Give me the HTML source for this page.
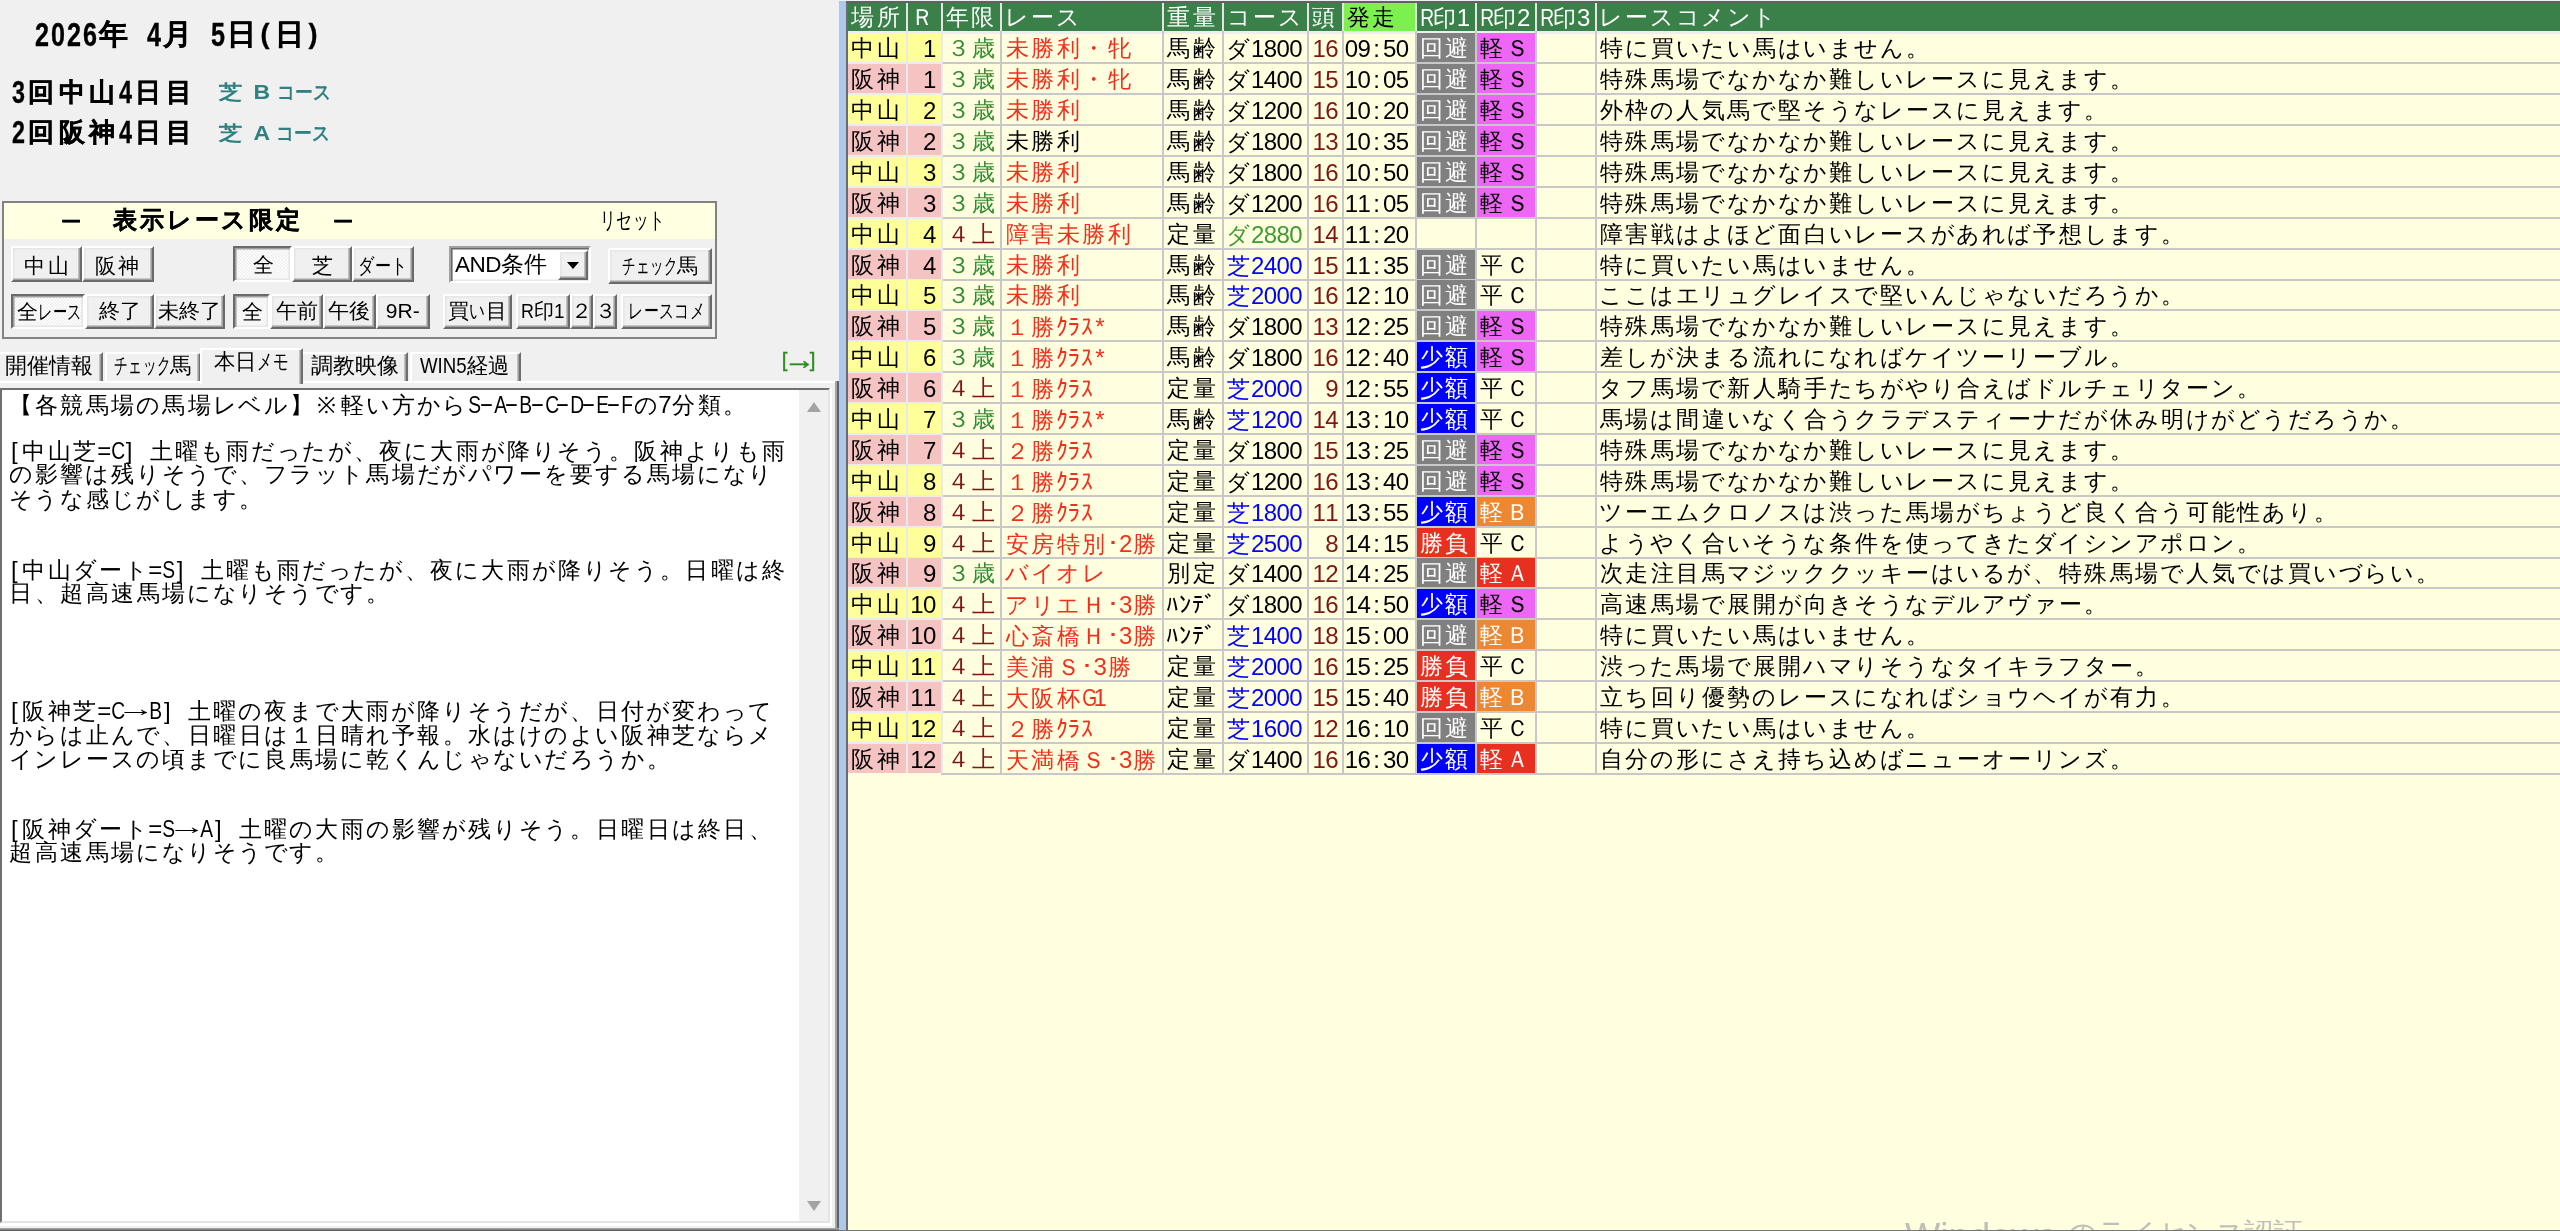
<!DOCTYPE html>
<html>
<head>
<meta charset="utf-8">
<title>レース一覧</title>
<style>
html,body{margin:0;padding:0}
body{width:2560px;height:1231px;overflow:hidden;position:relative;background:#f0f0f0;font-family:"Liberation Sans",sans-serif;color:#000}
div,span{box-sizing:border-box}
#root{position:absolute;left:0;top:0;width:2560px;height:1231px;overflow:hidden;will-change:transform}
.a{position:absolute;white-space:nowrap}
i{display:inline-block;width:.5em;text-align:center;font-style:normal;overflow:visible;white-space:nowrap}
i.w{transform:scaleX(.8)}
i.q{text-align:left}
i.hy{transform:translateY(-2.5px) scaleX(1.8)}
b.ar{transform:scaleX(1.7);position:relative;top:-3px}
b{display:inline-block;width:1em;text-align:center;font-weight:inherit;white-space:nowrap}
/* ---- table ---- */
#tb{position:absolute;left:848px;top:2px;width:1712px;height:1229px;background:linear-gradient(#626262,#626262) 0 0/100% 1px no-repeat #ffffe0;overflow:hidden}
.c b,.hd b{width:25.5px}.c i,.hd i{width:12.75px;font-size:24px}
.c{position:absolute;white-space:nowrap;overflow:hidden;font-size:22.6px;line-height:31px;height:29px;padding-left:2px}
.hd{position:absolute;white-space:nowrap;overflow:hidden;font-size:22.6px;line-height:29.5px;height:28px;top:1px;background:#398149;color:#fff;padding-left:2px}
.y{background:#ffff99}.p{background:#f6c3c3}
.g{color:#2f8b2f}.m{color:#7d1616}.r{color:#f0301c}.k{color:#000}.b{color:#0000ff}.j{color:#3f9a33}
.bg{background:#808080;color:#fff}.bb{background:#0000ff;color:#fff}.br{background:#e83020;color:#fff}
.bm{background:#ee66f5}.bo{background:#ec8832;color:#fff}
.hl{position:absolute;left:0;width:1712px;height:2px;background:#c8c8c8}
.vl{position:absolute;top:0;width:2px;background:#c8c8c8}
/* ---- left pane ---- */
#d1{left:33px;top:12px;font-size:28.8px;line-height:40px;font-weight:bold}
#d1 b{width:32px}#d1 i.pr{font-size:27px;top:-1px;transform:none}#d1 i{width:16px;font-size:34px;transform:scaleX(.74);position:relative;top:2px}
.l2{left:10px;font-size:26px;line-height:36px;font-weight:bold}
.l2 b{width:30.4px}.l2 i{width:16px;font-size:31.5px;transform:scaleX(.74);position:relative;top:2px}
.tl{color:#2f8080;font-weight:bold;font-size:23px;line-height:30px;transform:scaleY(.86);transform-origin:0 50%}
#pn{left:2px;top:200.5px;width:715px;height:138px;border:2px solid #828282;background:#f0f0f0}
#pnh{left:0;top:0;width:711px;height:36.5px;background:#ffffe1}
#ttl,#d1,.l2{-webkit-text-stroke:.35px #000}
#ttl{left:57px;top:207px;font-size:23.5px;line-height:26px;font-weight:bold}
#ttl b{width:27.2px}
.bt{position:absolute;white-space:nowrap;font-size:21px;line-height:22px;background:#f0f0f0;border-style:solid;border-width:2px;border-color:#fff #6a6a6a #6a6a6a #fff;box-shadow:inset -1.6px -1.6px 0 #a0a0a0,inset 1.6px 1.6px 0 #e6e6e6;display:flex;align-items:center;justify-content:center;overflow:hidden}
.bt.dn{background:repeating-conic-gradient(#fff 0 25%,#eee 0 50%) 0 0/3.2px 3.2px #f7f7f7;border-color:#6a6a6a #fff #fff #6a6a6a;box-shadow:inset 1.6px 1.6px 0 #a0a0a0,inset -1.6px -1.6px 0 #e6e6e6;padding:2px 0 0 3px}
.lb{display:block;flex:none;white-space:nowrap}
.sq{display:inline-block;vertical-align:baseline}
.sq>span{display:inline-block;transform-origin:0 50%;white-space:nowrap}
.r1{top:246px;height:36px;padding-top:3.5px}
.r2{top:293.5px;height:35.5px}
#cb{left:449px;top:246px;width:142px;height:37px;background:#fff;border-style:solid;border-width:2px;border-color:#a0a0a0 #fff #fff #a0a0a0;box-shadow:inset 1.6px 1.6px 0 #696969,inset -1.6px -1.6px 0 #e6e6e6}
.tab{position:absolute;white-space:nowrap;font-size:22.2px;line-height:24px;top:351.5px;height:29px;border-top:2px solid #fff;border-left:2px solid #fff;border-right:2.5px solid #6e6e6e;box-shadow:inset -1.6px 0 0 #a0a0a0;padding-top:0;display:flex;justify-content:center}
#memo{left:0;top:388px;width:830px;height:835px;background:#fff;border-style:solid;border-width:2.5px 2px 2px 2px;border-color:#707070 #e3e3e3 #e3e3e3 #707070;overflow:hidden}
.ml{position:absolute;left:6px;white-space:nowrap;font-size:22.6px;line-height:24px;height:24px}
.ml b{width:25.5px}.ml i{width:12.75px;font-size:24px}
</style>
</head>
<body>
<div id="root">
<div class="a" id="d1"><i>2</i><i>0</i><i>2</i><i>6</i><b>年</b><i>&nbsp;</i><i>4</i><b>月</b><i>&nbsp;</i><i>5</i><b>日</b><i class="pr">(</i><b>日</b><i class="pr">)</i></div>
<div class="a l2" style="top:72px"><i>3</i><b>回</b><b>中</b><b>山</b><i>4</i><b>日</b><b>目</b></div>
<div class="a l2" style="top:112.3px"><i>2</i><b>回</b><b>阪</b><b>神</b><i>4</i><b>日</b><b>目</b></div>
<div class="a tl" style="left:218.5px;top:77px">芝 <span style="margin-left:5.6px">B</span> <span class="sq" style="width:54.2px"><span style="transform:scaleX(0.77)">コース</span></span></div>
<div class="a tl" style="left:218.5px;top:117.5px">芝 <span style="margin-left:5.6px">A</span> <span class="sq" style="width:54.2px"><span style="transform:scaleX(0.77)">コース</span></span></div>
<div class="a" id="pn"><div class="a" id="pnh"></div></div>
<div class="a" id="ttl"><b style="transform:scaleX(1.5)">－</b><b>&nbsp;</b><b>表</b><b>示</b><b>レ</b><b>ー</b><b>ス</b><b>限</b><b>定</b><b>&nbsp;</b><b style="transform:scaleX(1.5)">－</b></div>
<div class="a" style="left:600px;top:208px;font-size:22.5px;line-height:26px"><span class="sq" style="width:62.4px"><span style="transform:scaleX(0.68)">リセット</span></span></div>
<div class="bt r1" style="left:11px;width:71px;letter-spacing:2.5px;padding-left:2px;"><span class="lb"><span class="sq">中山</span></span></div><div class="bt r1" style="left:82px;width:72px;letter-spacing:2.5px;"><span class="lb"><span class="sq">阪神</span></span></div><div class="bt r1 dn" style="left:232.5px;width:59.5px;"><span class="lb"><span class="sq">全</span></span></div><div class="bt r1" style="left:292px;width:60px;"><span class="lb"><span class="sq">芝</span></span></div><div class="bt r1" style="left:352px;width:61.75px;"><span class="lb"><span class="sq" style="width:49.5px"><span style="transform:scaleX(0.77)">ダート</span></span></span></div>
<div class="a" id="cb"><div class="a" style="left:4px;top:3.5px;font-size:22.5px;line-height:26px;letter-spacing:-.5px">AND条件</div><div class="bt" style="left:106.5px;top:1.5px;width:30px;height:30px"><span style="flex:none;width:0;height:0;border-left:6.5px solid transparent;border-right:6.5px solid transparent;border-top:7.5px solid #000;margin-top:2px"></span></div></div>
<div class="bt r1" style="left:608px;width:103.6px;top:248px;height:36px;padding-top:0;"><span class="lb"><span class="sq" style="width:54.8px"><span style="transform:scaleX(0.64)">チェック</span></span><span class="sq">馬</span></span></div>
<div class="bt r2 dn" style="left:11px;width:74px;"><span class="lb"><span class="sq">全</span><span class="sq" style="width:43.7px"><span style="transform:scaleX(0.68)">レース</span></span></span></div><div class="bt r2" style="left:85px;width:69px;"><span class="lb"><span class="sq">終了</span></span></div><div class="bt r2" style="left:154px;width:70.6px;"><span class="lb"><span class="sq">未終了</span></span></div><div class="bt r2 dn" style="left:232.5px;width:37.5px;"><span class="lb"><span class="sq">全</span></span></div><div class="bt r2" style="left:270px;width:53px;"><span class="lb"><span class="sq">午前</span></span></div><div class="bt r2" style="left:323px;width:52.6px;"><span class="lb"><span class="sq">午後</span></span></div><div class="bt r2" style="left:375.6px;width:54.4px;"><span class="lb"><span class="sq">9R-</span></span></div><div class="bt r2" style="left:443px;width:69px;"><span class="lb"><span class="sq">買</span><span class="sq" style="width:16.1px"><span style="transform:scaleX(0.75)">い</span></span><span class="sq">目</span></span></div><div class="bt r2" style="left:515.6px;width:54.15px;"><span class="lb"><span class="sq" style="width:12.9px"><span style="transform:scaleX(0.85)">R</span></span><span class="sq" style="width:19.9px"><span style="transform:scaleX(0.95)">印</span></span><span class="sq" style="width:10.5px"><span style="transform:scaleX(0.9)">1</span></span></span></div><div class="bt r2" style="left:569.75px;width:23.25px;"><span class="lb"><span class="sq">２</span></span></div><div class="bt r2" style="left:593px;width:24px;"><span class="lb"><span class="sq">３</span></span></div><div class="bt r2" style="left:621px;width:90.6px;"><span class="lb"><span class="sq" style="width:76.0px"><span style="transform:scaleX(0.71)">レースコメ</span></span></span></div>
<div class="a" style="left:0;top:380.5px;width:837px;height:2.5px;background:#fff"></div><div class="tab" style="left:-6px;width:109px;"><span class="lb"><span class="sq">開催情報</span></span></div><div class="tab" style="left:104.5px;width:96.5px;"><span class="lb"><span class="sq" style="width:56.2px"><span style="transform:scaleX(0.62)">チェック</span></span><span class="sq" style="width:21.5px"><span style="transform:scaleX(0.97)">馬</span></span></span></div><div class="tab" style="left:301px;width:107px;"><span class="lb"><span class="sq">調教映像</span></span></div><div class="tab" style="left:409.5px;width:111px;"><span class="lb"><span class="sq" style="width:46.6px"><span style="transform:scaleX(0.84)">WIN5</span></span><span class="sq" style="width:43.1px"><span style="transform:scaleX(0.97)">経過</span></span></span></div><div class="tab" style="left:200px;width:102.5px;top:347.5px;height:36px;background:#f0f0f0;"><span class="lb"><span class="sq" style="width:43.1px"><span style="transform:scaleX(0.97)">本日</span></span><span class="sq" style="width:31.7px"><span style="transform:scaleX(0.7)">メモ</span></span></span></div>
<div class="a" style="left:780.5px;top:346px;font-size:20.5px;line-height:28px;color:#2e8b22;-webkit-text-stroke:.4px #2e8b22"><i style="width:8px">[</i><b style="width:20px;transform:scale(1.55,1.35)">→</b><i style="width:8px">]</i></div>
<div class="a" style="left:835.4px;top:380.5px;width:3.6px;height:851px;background:linear-gradient(90deg,#a8a8a8,#a0a0a0 45%,#666 55%,#606060)"></div><div class="a" style="left:0;top:1227.8px;width:839px;height:3.2px;background:linear-gradient(180deg,#a8a8a8,#a0a0a0 45%,#666 55%,#606060)"></div>
<div class="a" id="memo">
<div class="ml" style="top:3.3px"><b>【</b><b>各</b><b>競</b><b>馬</b><b>場</b><b>の</b><b>馬</b><b>場</b><b>レ</b><b>ベ</b><b>ル</b><b>】</b><b>※</b><b>軽</b><b>い</b><b>方</b><b>か</b><b>ら</b><i class="w">S</i><i class="hy">-</i><i class="w">A</i><i class="hy">-</i><i class="w">B</i><i class="hy">-</i><i class="w">C</i><i class="hy">-</i><i class="w">D</i><i class="hy">-</i><i class="w">E</i><i class="hy">-</i><i class="w">F</i><b>の</b><i>7</i><b>分</b><b>類</b><b>。</b></div>
<div class="ml" style="top:49px"><i>[</i><b>中</b><b>山</b><b>芝</b><i>=</i><i class="w">C</i><i>]</i><i>&nbsp;</i><b>土</b><b>曜</b><b>も</b><b>雨</b><b>だ</b><b>っ</b><b>た</b><b>が</b><b>、</b><b>夜</b><b>に</b><b>大</b><b>雨</b><b>が</b><b>降</b><b>り</b><b>そ</b><b>う</b><b>。</b><b>阪</b><b>神</b><b>よ</b><b>り</b><b>も</b><b>雨</b></div>
<div class="ml" style="top:73.4px"><b>の</b><b>影</b><b>響</b><b>は</b><b>残</b><b>り</b><b>そ</b><b>う</b><b>で</b><b>、</b><b>フ</b><b>ラ</b><b>ッ</b><b>ト</b><b>馬</b><b>場</b><b>だ</b><b>が</b><b>パ</b><b>ワ</b><b>ー</b><b>を</b><b>要</b><b>す</b><b>る</b><b>馬</b><b>場</b><b>に</b><b>な</b><b>り</b></div>
<div class="ml" style="top:97.8px"><b>そ</b><b>う</b><b>な</b><b>感</b><b>じ</b><b>が</b><b>し</b><b>ま</b><b>す</b><b>。</b></div>
<div class="ml" style="top:167.9px"><i>[</i><b>中</b><b>山</b><b>ダ</b><b>ー</b><b>ト</b><i>=</i><i class="w">S</i><i>]</i><i>&nbsp;</i><b>土</b><b>曜</b><b>も</b><b>雨</b><b>だ</b><b>っ</b><b>た</b><b>が</b><b>、</b><b>夜</b><b>に</b><b>大</b><b>雨</b><b>が</b><b>降</b><b>り</b><b>そ</b><b>う</b><b>。</b><b>日</b><b>曜</b><b>は</b><b>終</b></div>
<div class="ml" style="top:192.2px"><b>日</b><b>、</b><b>超</b><b>高</b><b>速</b><b>馬</b><b>場</b><b>に</b><b>な</b><b>り</b><b>そ</b><b>う</b><b>で</b><b>す</b><b>。</b></div>
<div class="ml" style="top:309.2px"><i>[</i><b>阪</b><b>神</b><b>芝</b><i>=</i><i class="w">C</i><b class="ar">→</b><i class="w">B</i><i>]</i><i>&nbsp;</i><b>土</b><b>曜</b><b>の</b><b>夜</b><b>ま</b><b>で</b><b>大</b><b>雨</b><b>が</b><b>降</b><b>り</b><b>そ</b><b>う</b><b>だ</b><b>が</b><b>、</b><b>日</b><b>付</b><b>が</b><b>変</b><b>わ</b><b>っ</b><b>て</b></div>
<div class="ml" style="top:333.6px"><b>か</b><b>ら</b><b>は</b><b>止</b><b>ん</b><b>で</b><b>、</b><b>日</b><b>曜</b><b>日</b><b>は</b><b>１</b><b>日</b><b>晴</b><b>れ</b><b>予</b><b>報</b><b>。</b><b>水</b><b>は</b><b>け</b><b>の</b><b>よ</b><b>い</b><b>阪</b><b>神</b><b>芝</b><b>な</b><b>ら</b><b>メ</b></div>
<div class="ml" style="top:358px"><b>イ</b><b>ン</b><b>レ</b><b>ー</b><b>ス</b><b>の</b><b>頃</b><b>ま</b><b>で</b><b>に</b><b>良</b><b>馬</b><b>場</b><b>に</b><b>乾</b><b>く</b><b>ん</b><b>じ</b><b>ゃ</b><b>な</b><b>い</b><b>だ</b><b>ろ</b><b>う</b><b>か</b><b>。</b></div>
<div class="ml" style="top:427px"><i>[</i><b>阪</b><b>神</b><b>ダ</b><b>ー</b><b>ト</b><i>=</i><i class="w">S</i><b class="ar">→</b><i class="w">A</i><i>]</i><i>&nbsp;</i><b>土</b><b>曜</b><b>の</b><b>大</b><b>雨</b><b>の</b><b>影</b><b>響</b><b>が</b><b>残</b><b>り</b><b>そ</b><b>う</b><b>。</b><b>日</b><b>曜</b><b>日</b><b>は</b><b>終</b><b>日</b><b>、</b></div>
<div class="ml" style="top:451.4px"><b>超</b><b>高</b><b>速</b><b>馬</b><b>場</b><b>に</b><b>な</b><b>り</b><b>そ</b><b>う</b><b>で</b><b>す</b><b>。</b></div>
<div class="a" style="left:797px;top:0;width:29px;height:832px;background:#f0f0f0"></div><div class="a" style="left:804.5px;top:12px;width:0;height:0;border-left:7.5px solid transparent;border-right:7.5px solid transparent;border-bottom:10.5px solid #a3a3a3"></div><div class="a" style="left:804.5px;top:811px;width:0;height:0;border-left:7.5px solid transparent;border-right:7.5px solid transparent;border-top:10.5px solid #a3a3a3"></div></div>
<div class="a" style="left:0;top:1223px;width:832px;height:2.5px;background:#fff"></div><div class="a" style="left:830px;top:388px;width:2px;height:837px;background:#fff"></div>
<div class="a" style="left:839px;top:1px;width:8px;height:1230px;background:#abc8ed"></div>
<div class="a" style="left:846px;top:1px;width:2px;height:1230px;background:#6c6c6c"></div>
<div class="a" style="left:846px;top:0;width:1714px;height:1px;background:#f0f0f0"></div>
<div class="a" style="left:846px;top:1px;width:1714px;height:2px;background:#626262"></div>
<div id="tb">
<div class="hd" style="left:0px;width:58px;"><b>場</b><b>所</b></div><div class="hd" style="left:60px;width:32.75px;"><b>Ｒ</b></div><div class="hd" style="left:94.5px;width:57.75px;"><b>年</b><b>限</b></div><div class="hd" style="left:154.25px;width:159.75px;"><b>レ</b><b>ー</b><b>ス</b></div><div class="hd" style="left:316px;width:58px;"><b>重</b><b>量</b></div><div class="hd" style="left:376px;width:83px;"><b>コ</b><b>ー</b><b>ス</b></div><div class="hd" style="left:461px;width:32.5px;"><b>頭</b></div><div class="hd" style="left:495.25px;width:71.25px;background:#7bf04f;color:#000;"><b>発</b><b>走</b></div><div class="hd" style="left:568.5px;width:58.25px;"><i class="w">R</i><b>印</b><i>1</i></div><div class="hd" style="left:628.75px;width:58.25px;"><i class="w">R</i><b>印</b><i>2</i></div><div class="hd" style="left:688.75px;width:57.75px;"><i class="w">R</i><b>印</b><i>3</i></div><div class="hd" style="left:748.5px;width:963.5px;"><b>レ</b><b>ー</b><b>ス</b><b>コ</b><b>メ</b><b>ン</b><b>ト</b></div>
<div class="vl" style="left:58px;top:1px;height:28px;background:#e4e4e4"></div><div class="vl" style="left:92.75px;top:1px;height:28px;background:#e4e4e4"></div><div class="vl" style="left:152.25px;top:1px;height:28px;background:#e4e4e4"></div><div class="vl" style="left:314px;top:1px;height:28px;background:#e4e4e4"></div><div class="vl" style="left:374px;top:1px;height:28px;background:#e4e4e4"></div><div class="vl" style="left:459px;top:1px;height:28px;background:#e4e4e4"></div><div class="vl" style="left:493.5px;top:1px;height:28px;background:#e4e4e4"></div><div class="vl" style="left:566.5px;top:1px;height:28px;background:#e4e4e4"></div><div class="vl" style="left:626.75px;top:1px;height:28px;background:#e4e4e4"></div><div class="vl" style="left:687px;top:1px;height:28px;background:#e4e4e4"></div><div class="vl" style="left:746.5px;top:1px;height:28px;background:#e4e4e4"></div><div class="hl" style="top:29px;height:3px;background:#eeeeee"></div>
<div class="c y" style="left:0px;width:58px;top:31.30px;"><b>中</b><b>山</b></div><div class="c y" style="left:60px;width:32.75px;top:31.30px;text-align:right;padding-right:5px;padding-left:0;"><i>1</i></div><div class="c g" style="left:94.5px;width:57.75px;top:31.30px;padding-left:3px;"><b>３</b><b>歳</b></div><div class="c r" style="left:154.25px;width:159.75px;top:31.30px;"><b>未</b><b>勝</b><b>利</b><b>・</b><b>牝</b></div><div class="c k" style="left:316px;width:58px;top:31.30px;"><b>馬</b><b>齢</b></div><div class="c k" style="left:376px;width:83px;top:31.30px;padding-left:1.5px;"><b>ダ</b><i>1</i><i>8</i><i>0</i><i>0</i></div><div class="c m" style="left:461px;width:32.5px;top:31.30px;padding-left:3.5px;"><i>1</i><i>6</i></div><div class="c k" style="left:495.25px;width:71.25px;top:31.30px;padding-left:1.5px;"><i>0</i><i>9</i><i>:</i><i>5</i><i>0</i></div><div class="c bg" style="left:568.5px;width:58.25px;top:31.30px;"><b>回</b><b>避</b></div><div class="c bm" style="left:628.75px;width:58.25px;top:31.30px;"><b>軽</b><b>Ｓ</b></div><div class="c k" style="left:748.5px;width:963.5px;top:31.30px;"><b>特</b><b>に</b><b>買</b><b>い</b><b>た</b><b>い</b><b>馬</b><b>は</b><b>い</b><b>ま</b><b>せ</b><b>ん</b><b>。</b></div>
<div class="hl" style="top:60.30px;left:0px"></div><div class="hl" style="top:60.30px;left:0;width:92.5px;background:#ececec"></div>
<div class="c p" style="left:0px;width:58px;top:62.19px;"><b>阪</b><b>神</b></div><div class="c p" style="left:60px;width:32.75px;top:62.19px;text-align:right;padding-right:5px;padding-left:0;"><i>1</i></div><div class="c g" style="left:94.5px;width:57.75px;top:62.19px;padding-left:3px;"><b>３</b><b>歳</b></div><div class="c r" style="left:154.25px;width:159.75px;top:62.19px;"><b>未</b><b>勝</b><b>利</b><b>・</b><b>牝</b></div><div class="c k" style="left:316px;width:58px;top:62.19px;"><b>馬</b><b>齢</b></div><div class="c k" style="left:376px;width:83px;top:62.19px;padding-left:1.5px;"><b>ダ</b><i>1</i><i>4</i><i>0</i><i>0</i></div><div class="c m" style="left:461px;width:32.5px;top:62.19px;padding-left:3.5px;"><i>1</i><i>5</i></div><div class="c k" style="left:495.25px;width:71.25px;top:62.19px;padding-left:1.5px;"><i>1</i><i>0</i><i>:</i><i>0</i><i>5</i></div><div class="c bg" style="left:568.5px;width:58.25px;top:62.19px;"><b>回</b><b>避</b></div><div class="c bm" style="left:628.75px;width:58.25px;top:62.19px;"><b>軽</b><b>Ｓ</b></div><div class="c k" style="left:748.5px;width:963.5px;top:62.19px;"><b>特</b><b>殊</b><b>馬</b><b>場</b><b>で</b><b>な</b><b>か</b><b>な</b><b>か</b><b>難</b><b>し</b><b>い</b><b>レ</b><b>ー</b><b>ス</b><b>に</b><b>見</b><b>え</b><b>ま</b><b>す</b><b>。</b></div>
<div class="hl" style="top:91.19px;left:0px"></div><div class="hl" style="top:91.19px;left:0;width:92.5px;background:#ececec"></div>
<div class="c y" style="left:0px;width:58px;top:93.08px;"><b>中</b><b>山</b></div><div class="c y" style="left:60px;width:32.75px;top:93.08px;text-align:right;padding-right:5px;padding-left:0;"><i>2</i></div><div class="c g" style="left:94.5px;width:57.75px;top:93.08px;padding-left:3px;"><b>３</b><b>歳</b></div><div class="c r" style="left:154.25px;width:159.75px;top:93.08px;"><b>未</b><b>勝</b><b>利</b></div><div class="c k" style="left:316px;width:58px;top:93.08px;"><b>馬</b><b>齢</b></div><div class="c k" style="left:376px;width:83px;top:93.08px;padding-left:1.5px;"><b>ダ</b><i>1</i><i>2</i><i>0</i><i>0</i></div><div class="c m" style="left:461px;width:32.5px;top:93.08px;padding-left:3.5px;"><i>1</i><i>6</i></div><div class="c k" style="left:495.25px;width:71.25px;top:93.08px;padding-left:1.5px;"><i>1</i><i>0</i><i>:</i><i>2</i><i>0</i></div><div class="c bg" style="left:568.5px;width:58.25px;top:93.08px;"><b>回</b><b>避</b></div><div class="c bm" style="left:628.75px;width:58.25px;top:93.08px;"><b>軽</b><b>Ｓ</b></div><div class="c k" style="left:748.5px;width:963.5px;top:93.08px;"><b>外</b><b>枠</b><b>の</b><b>人</b><b>気</b><b>馬</b><b>で</b><b>堅</b><b>そ</b><b>う</b><b>な</b><b>レ</b><b>ー</b><b>ス</b><b>に</b><b>見</b><b>え</b><b>ま</b><b>す</b><b>。</b></div>
<div class="hl" style="top:122.08px;left:0px"></div><div class="hl" style="top:122.08px;left:0;width:92.5px;background:#ececec"></div>
<div class="c p" style="left:0px;width:58px;top:123.97px;"><b>阪</b><b>神</b></div><div class="c p" style="left:60px;width:32.75px;top:123.97px;text-align:right;padding-right:5px;padding-left:0;"><i>2</i></div><div class="c g" style="left:94.5px;width:57.75px;top:123.97px;padding-left:3px;"><b>３</b><b>歳</b></div><div class="c k" style="left:154.25px;width:159.75px;top:123.97px;"><b>未</b><b>勝</b><b>利</b></div><div class="c k" style="left:316px;width:58px;top:123.97px;"><b>馬</b><b>齢</b></div><div class="c k" style="left:376px;width:83px;top:123.97px;padding-left:1.5px;"><b>ダ</b><i>1</i><i>8</i><i>0</i><i>0</i></div><div class="c m" style="left:461px;width:32.5px;top:123.97px;padding-left:3.5px;"><i>1</i><i>3</i></div><div class="c k" style="left:495.25px;width:71.25px;top:123.97px;padding-left:1.5px;"><i>1</i><i>0</i><i>:</i><i>3</i><i>5</i></div><div class="c bg" style="left:568.5px;width:58.25px;top:123.97px;"><b>回</b><b>避</b></div><div class="c bm" style="left:628.75px;width:58.25px;top:123.97px;"><b>軽</b><b>Ｓ</b></div><div class="c k" style="left:748.5px;width:963.5px;top:123.97px;"><b>特</b><b>殊</b><b>馬</b><b>場</b><b>で</b><b>な</b><b>か</b><b>な</b><b>か</b><b>難</b><b>し</b><b>い</b><b>レ</b><b>ー</b><b>ス</b><b>に</b><b>見</b><b>え</b><b>ま</b><b>す</b><b>。</b></div>
<div class="hl" style="top:152.97px;left:0px"></div><div class="hl" style="top:152.97px;left:0;width:92.5px;background:#ececec"></div>
<div class="c y" style="left:0px;width:58px;top:154.86px;"><b>中</b><b>山</b></div><div class="c y" style="left:60px;width:32.75px;top:154.86px;text-align:right;padding-right:5px;padding-left:0;"><i>3</i></div><div class="c g" style="left:94.5px;width:57.75px;top:154.86px;padding-left:3px;"><b>３</b><b>歳</b></div><div class="c r" style="left:154.25px;width:159.75px;top:154.86px;"><b>未</b><b>勝</b><b>利</b></div><div class="c k" style="left:316px;width:58px;top:154.86px;"><b>馬</b><b>齢</b></div><div class="c k" style="left:376px;width:83px;top:154.86px;padding-left:1.5px;"><b>ダ</b><i>1</i><i>8</i><i>0</i><i>0</i></div><div class="c m" style="left:461px;width:32.5px;top:154.86px;padding-left:3.5px;"><i>1</i><i>6</i></div><div class="c k" style="left:495.25px;width:71.25px;top:154.86px;padding-left:1.5px;"><i>1</i><i>0</i><i>:</i><i>5</i><i>0</i></div><div class="c bg" style="left:568.5px;width:58.25px;top:154.86px;"><b>回</b><b>避</b></div><div class="c bm" style="left:628.75px;width:58.25px;top:154.86px;"><b>軽</b><b>Ｓ</b></div><div class="c k" style="left:748.5px;width:963.5px;top:154.86px;"><b>特</b><b>殊</b><b>馬</b><b>場</b><b>で</b><b>な</b><b>か</b><b>な</b><b>か</b><b>難</b><b>し</b><b>い</b><b>レ</b><b>ー</b><b>ス</b><b>に</b><b>見</b><b>え</b><b>ま</b><b>す</b><b>。</b></div>
<div class="hl" style="top:183.86px;left:0px"></div><div class="hl" style="top:183.86px;left:0;width:92.5px;background:#ececec"></div>
<div class="c p" style="left:0px;width:58px;top:185.75px;"><b>阪</b><b>神</b></div><div class="c p" style="left:60px;width:32.75px;top:185.75px;text-align:right;padding-right:5px;padding-left:0;"><i>3</i></div><div class="c g" style="left:94.5px;width:57.75px;top:185.75px;padding-left:3px;"><b>３</b><b>歳</b></div><div class="c r" style="left:154.25px;width:159.75px;top:185.75px;"><b>未</b><b>勝</b><b>利</b></div><div class="c k" style="left:316px;width:58px;top:185.75px;"><b>馬</b><b>齢</b></div><div class="c k" style="left:376px;width:83px;top:185.75px;padding-left:1.5px;"><b>ダ</b><i>1</i><i>2</i><i>0</i><i>0</i></div><div class="c m" style="left:461px;width:32.5px;top:185.75px;padding-left:3.5px;"><i>1</i><i>6</i></div><div class="c k" style="left:495.25px;width:71.25px;top:185.75px;padding-left:1.5px;"><i>1</i><i>1</i><i>:</i><i>0</i><i>5</i></div><div class="c bg" style="left:568.5px;width:58.25px;top:185.75px;"><b>回</b><b>避</b></div><div class="c bm" style="left:628.75px;width:58.25px;top:185.75px;"><b>軽</b><b>Ｓ</b></div><div class="c k" style="left:748.5px;width:963.5px;top:185.75px;"><b>特</b><b>殊</b><b>馬</b><b>場</b><b>で</b><b>な</b><b>か</b><b>な</b><b>か</b><b>難</b><b>し</b><b>い</b><b>レ</b><b>ー</b><b>ス</b><b>に</b><b>見</b><b>え</b><b>ま</b><b>す</b><b>。</b></div>
<div class="hl" style="top:214.75px;left:0px"></div><div class="hl" style="top:214.75px;left:0;width:92.5px;background:#ececec"></div>
<div class="c y" style="left:0px;width:58px;top:216.64px;"><b>中</b><b>山</b></div><div class="c y" style="left:60px;width:32.75px;top:216.64px;text-align:right;padding-right:5px;padding-left:0;"><i>4</i></div><div class="c m" style="left:94.5px;width:57.75px;top:216.64px;padding-left:3px;"><b>４</b><b>上</b></div><div class="c r" style="left:154.25px;width:159.75px;top:216.64px;"><b>障</b><b>害</b><b>未</b><b>勝</b><b>利</b></div><div class="c k" style="left:316px;width:58px;top:216.64px;"><b>定</b><b>量</b></div><div class="c j" style="left:376px;width:83px;top:216.64px;padding-left:1.5px;"><b>ダ</b><i>2</i><i>8</i><i>8</i><i>0</i></div><div class="c m" style="left:461px;width:32.5px;top:216.64px;padding-left:3.5px;"><i>1</i><i>4</i></div><div class="c k" style="left:495.25px;width:71.25px;top:216.64px;padding-left:1.5px;"><i>1</i><i>1</i><i>:</i><i>2</i><i>0</i></div><div class="c k" style="left:748.5px;width:963.5px;top:216.64px;"><b>障</b><b>害</b><b>戦</b><b>は</b><b>よ</b><b>ほ</b><b>ど</b><b>面</b><b>白</b><b>い</b><b>レ</b><b>ー</b><b>ス</b><b>が</b><b>あ</b><b>れ</b><b>ば</b><b>予</b><b>想</b><b>し</b><b>ま</b><b>す</b><b>。</b></div>
<div class="hl" style="top:245.64px;left:0px"></div><div class="hl" style="top:245.64px;left:0;width:92.5px;background:#ececec"></div>
<div class="c p" style="left:0px;width:58px;top:247.53px;"><b>阪</b><b>神</b></div><div class="c p" style="left:60px;width:32.75px;top:247.53px;text-align:right;padding-right:5px;padding-left:0;"><i>4</i></div><div class="c g" style="left:94.5px;width:57.75px;top:247.53px;padding-left:3px;"><b>３</b><b>歳</b></div><div class="c r" style="left:154.25px;width:159.75px;top:247.53px;"><b>未</b><b>勝</b><b>利</b></div><div class="c k" style="left:316px;width:58px;top:247.53px;"><b>馬</b><b>齢</b></div><div class="c b" style="left:376px;width:83px;top:247.53px;padding-left:1.5px;"><b>芝</b><i>2</i><i>4</i><i>0</i><i>0</i></div><div class="c m" style="left:461px;width:32.5px;top:247.53px;padding-left:3.5px;"><i>1</i><i>5</i></div><div class="c k" style="left:495.25px;width:71.25px;top:247.53px;padding-left:1.5px;"><i>1</i><i>1</i><i>:</i><i>3</i><i>5</i></div><div class="c bg" style="left:568.5px;width:58.25px;top:247.53px;"><b>回</b><b>避</b></div><div class="c k" style="left:628.75px;width:58.25px;top:247.53px;"><b>平</b><b>Ｃ</b></div><div class="c k" style="left:748.5px;width:963.5px;top:247.53px;"><b>特</b><b>に</b><b>買</b><b>い</b><b>た</b><b>い</b><b>馬</b><b>は</b><b>い</b><b>ま</b><b>せ</b><b>ん</b><b>。</b></div>
<div class="hl" style="top:276.53px;left:0px"></div><div class="hl" style="top:276.53px;left:0;width:92.5px;background:#ececec"></div>
<div class="c y" style="left:0px;width:58px;top:278.42px;"><b>中</b><b>山</b></div><div class="c y" style="left:60px;width:32.75px;top:278.42px;text-align:right;padding-right:5px;padding-left:0;"><i>5</i></div><div class="c g" style="left:94.5px;width:57.75px;top:278.42px;padding-left:3px;"><b>３</b><b>歳</b></div><div class="c r" style="left:154.25px;width:159.75px;top:278.42px;"><b>未</b><b>勝</b><b>利</b></div><div class="c k" style="left:316px;width:58px;top:278.42px;"><b>馬</b><b>齢</b></div><div class="c b" style="left:376px;width:83px;top:278.42px;padding-left:1.5px;"><b>芝</b><i>2</i><i>0</i><i>0</i><i>0</i></div><div class="c m" style="left:461px;width:32.5px;top:278.42px;padding-left:3.5px;"><i>1</i><i>6</i></div><div class="c k" style="left:495.25px;width:71.25px;top:278.42px;padding-left:1.5px;"><i>1</i><i>2</i><i>:</i><i>1</i><i>0</i></div><div class="c bg" style="left:568.5px;width:58.25px;top:278.42px;"><b>回</b><b>避</b></div><div class="c k" style="left:628.75px;width:58.25px;top:278.42px;"><b>平</b><b>Ｃ</b></div><div class="c k" style="left:748.5px;width:963.5px;top:278.42px;"><b>こ</b><b>こ</b><b>は</b><b>エ</b><b>リ</b><b>ュ</b><b>グ</b><b>レ</b><b>イ</b><b>ス</b><b>で</b><b>堅</b><b>い</b><b>ん</b><b>じ</b><b>ゃ</b><b>な</b><b>い</b><b>だ</b><b>ろ</b><b>う</b><b>か</b><b>。</b></div>
<div class="hl" style="top:307.42px;left:0px"></div><div class="hl" style="top:307.42px;left:0;width:92.5px;background:#ececec"></div>
<div class="c p" style="left:0px;width:58px;top:309.31px;"><b>阪</b><b>神</b></div><div class="c p" style="left:60px;width:32.75px;top:309.31px;text-align:right;padding-right:5px;padding-left:0;"><i>5</i></div><div class="c g" style="left:94.5px;width:57.75px;top:309.31px;padding-left:3px;"><b>３</b><b>歳</b></div><div class="c r" style="left:154.25px;width:159.75px;top:309.31px;"><b>１</b><b>勝</b><i>ｸ</i><i>ﾗ</i><i>ｽ</i><i>*</i></div><div class="c k" style="left:316px;width:58px;top:309.31px;"><b>馬</b><b>齢</b></div><div class="c k" style="left:376px;width:83px;top:309.31px;padding-left:1.5px;"><b>ダ</b><i>1</i><i>8</i><i>0</i><i>0</i></div><div class="c m" style="left:461px;width:32.5px;top:309.31px;padding-left:3.5px;"><i>1</i><i>3</i></div><div class="c k" style="left:495.25px;width:71.25px;top:309.31px;padding-left:1.5px;"><i>1</i><i>2</i><i>:</i><i>2</i><i>5</i></div><div class="c bg" style="left:568.5px;width:58.25px;top:309.31px;"><b>回</b><b>避</b></div><div class="c bm" style="left:628.75px;width:58.25px;top:309.31px;"><b>軽</b><b>Ｓ</b></div><div class="c k" style="left:748.5px;width:963.5px;top:309.31px;"><b>特</b><b>殊</b><b>馬</b><b>場</b><b>で</b><b>な</b><b>か</b><b>な</b><b>か</b><b>難</b><b>し</b><b>い</b><b>レ</b><b>ー</b><b>ス</b><b>に</b><b>見</b><b>え</b><b>ま</b><b>す</b><b>。</b></div>
<div class="hl" style="top:338.31px;left:0px"></div><div class="hl" style="top:338.31px;left:0;width:92.5px;background:#ececec"></div>
<div class="c y" style="left:0px;width:58px;top:340.20px;"><b>中</b><b>山</b></div><div class="c y" style="left:60px;width:32.75px;top:340.20px;text-align:right;padding-right:5px;padding-left:0;"><i>6</i></div><div class="c g" style="left:94.5px;width:57.75px;top:340.20px;padding-left:3px;"><b>３</b><b>歳</b></div><div class="c r" style="left:154.25px;width:159.75px;top:340.20px;"><b>１</b><b>勝</b><i>ｸ</i><i>ﾗ</i><i>ｽ</i><i>*</i></div><div class="c k" style="left:316px;width:58px;top:340.20px;"><b>馬</b><b>齢</b></div><div class="c k" style="left:376px;width:83px;top:340.20px;padding-left:1.5px;"><b>ダ</b><i>1</i><i>8</i><i>0</i><i>0</i></div><div class="c m" style="left:461px;width:32.5px;top:340.20px;padding-left:3.5px;"><i>1</i><i>6</i></div><div class="c k" style="left:495.25px;width:71.25px;top:340.20px;padding-left:1.5px;"><i>1</i><i>2</i><i>:</i><i>4</i><i>0</i></div><div class="c bb" style="left:568.5px;width:58.25px;top:340.20px;"><b>少</b><b>額</b></div><div class="c bm" style="left:628.75px;width:58.25px;top:340.20px;"><b>軽</b><b>Ｓ</b></div><div class="c k" style="left:748.5px;width:963.5px;top:340.20px;"><b>差</b><b>し</b><b>が</b><b>決</b><b>ま</b><b>る</b><b>流</b><b>れ</b><b>に</b><b>な</b><b>れ</b><b>ば</b><b>ケ</b><b>イ</b><b>ツ</b><b>ー</b><b>リ</b><b>ー</b><b>ブ</b><b>ル</b><b>。</b></div>
<div class="hl" style="top:369.20px;left:0px"></div><div class="hl" style="top:369.20px;left:0;width:92.5px;background:#ececec"></div>
<div class="c p" style="left:0px;width:58px;top:371.09px;"><b>阪</b><b>神</b></div><div class="c p" style="left:60px;width:32.75px;top:371.09px;text-align:right;padding-right:5px;padding-left:0;"><i>6</i></div><div class="c m" style="left:94.5px;width:57.75px;top:371.09px;padding-left:3px;"><b>４</b><b>上</b></div><div class="c r" style="left:154.25px;width:159.75px;top:371.09px;"><b>１</b><b>勝</b><i>ｸ</i><i>ﾗ</i><i>ｽ</i></div><div class="c k" style="left:316px;width:58px;top:371.09px;"><b>定</b><b>量</b></div><div class="c b" style="left:376px;width:83px;top:371.09px;padding-left:1.5px;"><b>芝</b><i>2</i><i>0</i><i>0</i><i>0</i></div><div class="c m" style="left:461px;width:32.5px;top:371.09px;padding-left:3.5px;"><i>&nbsp;</i><i>9</i></div><div class="c k" style="left:495.25px;width:71.25px;top:371.09px;padding-left:1.5px;"><i>1</i><i>2</i><i>:</i><i>5</i><i>5</i></div><div class="c bb" style="left:568.5px;width:58.25px;top:371.09px;"><b>少</b><b>額</b></div><div class="c k" style="left:628.75px;width:58.25px;top:371.09px;"><b>平</b><b>Ｃ</b></div><div class="c k" style="left:748.5px;width:963.5px;top:371.09px;"><b>タ</b><b>フ</b><b>馬</b><b>場</b><b>で</b><b>新</b><b>人</b><b>騎</b><b>手</b><b>た</b><b>ち</b><b>が</b><b>や</b><b>り</b><b>合</b><b>え</b><b>ば</b><b>ド</b><b>ル</b><b>チ</b><b>ェ</b><b>リ</b><b>タ</b><b>ー</b><b>ン</b><b>。</b></div>
<div class="hl" style="top:400.09px;left:0px"></div><div class="hl" style="top:400.09px;left:0;width:92.5px;background:#ececec"></div>
<div class="c y" style="left:0px;width:58px;top:401.98px;"><b>中</b><b>山</b></div><div class="c y" style="left:60px;width:32.75px;top:401.98px;text-align:right;padding-right:5px;padding-left:0;"><i>7</i></div><div class="c g" style="left:94.5px;width:57.75px;top:401.98px;padding-left:3px;"><b>３</b><b>歳</b></div><div class="c r" style="left:154.25px;width:159.75px;top:401.98px;"><b>１</b><b>勝</b><i>ｸ</i><i>ﾗ</i><i>ｽ</i><i>*</i></div><div class="c k" style="left:316px;width:58px;top:401.98px;"><b>馬</b><b>齢</b></div><div class="c b" style="left:376px;width:83px;top:401.98px;padding-left:1.5px;"><b>芝</b><i>1</i><i>2</i><i>0</i><i>0</i></div><div class="c m" style="left:461px;width:32.5px;top:401.98px;padding-left:3.5px;"><i>1</i><i>4</i></div><div class="c k" style="left:495.25px;width:71.25px;top:401.98px;padding-left:1.5px;"><i>1</i><i>3</i><i>:</i><i>1</i><i>0</i></div><div class="c bb" style="left:568.5px;width:58.25px;top:401.98px;"><b>少</b><b>額</b></div><div class="c k" style="left:628.75px;width:58.25px;top:401.98px;"><b>平</b><b>Ｃ</b></div><div class="c k" style="left:748.5px;width:963.5px;top:401.98px;"><b>馬</b><b>場</b><b>は</b><b>間</b><b>違</b><b>い</b><b>な</b><b>く</b><b>合</b><b>う</b><b>ク</b><b>ラ</b><b>デ</b><b>ス</b><b>テ</b><b>ィ</b><b>ー</b><b>ナ</b><b>だ</b><b>が</b><b>休</b><b>み</b><b>明</b><b>け</b><b>が</b><b>ど</b><b>う</b><b>だ</b><b>ろ</b><b>う</b><b>か</b><b>。</b></div>
<div class="hl" style="top:430.98px;left:0px"></div><div class="hl" style="top:430.98px;left:0;width:92.5px;background:#ececec"></div>
<div class="c p" style="left:0px;width:58px;top:432.87px;"><b>阪</b><b>神</b></div><div class="c p" style="left:60px;width:32.75px;top:432.87px;text-align:right;padding-right:5px;padding-left:0;"><i>7</i></div><div class="c m" style="left:94.5px;width:57.75px;top:432.87px;padding-left:3px;"><b>４</b><b>上</b></div><div class="c r" style="left:154.25px;width:159.75px;top:432.87px;"><b>２</b><b>勝</b><i>ｸ</i><i>ﾗ</i><i>ｽ</i></div><div class="c k" style="left:316px;width:58px;top:432.87px;"><b>定</b><b>量</b></div><div class="c k" style="left:376px;width:83px;top:432.87px;padding-left:1.5px;"><b>ダ</b><i>1</i><i>8</i><i>0</i><i>0</i></div><div class="c m" style="left:461px;width:32.5px;top:432.87px;padding-left:3.5px;"><i>1</i><i>5</i></div><div class="c k" style="left:495.25px;width:71.25px;top:432.87px;padding-left:1.5px;"><i>1</i><i>3</i><i>:</i><i>2</i><i>5</i></div><div class="c bg" style="left:568.5px;width:58.25px;top:432.87px;"><b>回</b><b>避</b></div><div class="c bm" style="left:628.75px;width:58.25px;top:432.87px;"><b>軽</b><b>Ｓ</b></div><div class="c k" style="left:748.5px;width:963.5px;top:432.87px;"><b>特</b><b>殊</b><b>馬</b><b>場</b><b>で</b><b>な</b><b>か</b><b>な</b><b>か</b><b>難</b><b>し</b><b>い</b><b>レ</b><b>ー</b><b>ス</b><b>に</b><b>見</b><b>え</b><b>ま</b><b>す</b><b>。</b></div>
<div class="hl" style="top:461.87px;left:0px"></div><div class="hl" style="top:461.87px;left:0;width:92.5px;background:#ececec"></div>
<div class="c y" style="left:0px;width:58px;top:463.76px;"><b>中</b><b>山</b></div><div class="c y" style="left:60px;width:32.75px;top:463.76px;text-align:right;padding-right:5px;padding-left:0;"><i>8</i></div><div class="c m" style="left:94.5px;width:57.75px;top:463.76px;padding-left:3px;"><b>４</b><b>上</b></div><div class="c r" style="left:154.25px;width:159.75px;top:463.76px;"><b>１</b><b>勝</b><i>ｸ</i><i>ﾗ</i><i>ｽ</i></div><div class="c k" style="left:316px;width:58px;top:463.76px;"><b>定</b><b>量</b></div><div class="c k" style="left:376px;width:83px;top:463.76px;padding-left:1.5px;"><b>ダ</b><i>1</i><i>2</i><i>0</i><i>0</i></div><div class="c m" style="left:461px;width:32.5px;top:463.76px;padding-left:3.5px;"><i>1</i><i>6</i></div><div class="c k" style="left:495.25px;width:71.25px;top:463.76px;padding-left:1.5px;"><i>1</i><i>3</i><i>:</i><i>4</i><i>0</i></div><div class="c bg" style="left:568.5px;width:58.25px;top:463.76px;"><b>回</b><b>避</b></div><div class="c bm" style="left:628.75px;width:58.25px;top:463.76px;"><b>軽</b><b>Ｓ</b></div><div class="c k" style="left:748.5px;width:963.5px;top:463.76px;"><b>特</b><b>殊</b><b>馬</b><b>場</b><b>で</b><b>な</b><b>か</b><b>な</b><b>か</b><b>難</b><b>し</b><b>い</b><b>レ</b><b>ー</b><b>ス</b><b>に</b><b>見</b><b>え</b><b>ま</b><b>す</b><b>。</b></div>
<div class="hl" style="top:492.76px;left:0px"></div><div class="hl" style="top:492.76px;left:0;width:92.5px;background:#ececec"></div>
<div class="c p" style="left:0px;width:58px;top:494.65px;"><b>阪</b><b>神</b></div><div class="c p" style="left:60px;width:32.75px;top:494.65px;text-align:right;padding-right:5px;padding-left:0;"><i>8</i></div><div class="c m" style="left:94.5px;width:57.75px;top:494.65px;padding-left:3px;"><b>４</b><b>上</b></div><div class="c r" style="left:154.25px;width:159.75px;top:494.65px;"><b>２</b><b>勝</b><i>ｸ</i><i>ﾗ</i><i>ｽ</i></div><div class="c k" style="left:316px;width:58px;top:494.65px;"><b>定</b><b>量</b></div><div class="c b" style="left:376px;width:83px;top:494.65px;padding-left:1.5px;"><b>芝</b><i>1</i><i>8</i><i>0</i><i>0</i></div><div class="c m" style="left:461px;width:32.5px;top:494.65px;padding-left:3.5px;"><i>1</i><i>1</i></div><div class="c k" style="left:495.25px;width:71.25px;top:494.65px;padding-left:1.5px;"><i>1</i><i>3</i><i>:</i><i>5</i><i>5</i></div><div class="c bb" style="left:568.5px;width:58.25px;top:494.65px;"><b>少</b><b>額</b></div><div class="c bo" style="left:628.75px;width:58.25px;top:494.65px;"><b>軽</b><b>Ｂ</b></div><div class="c k" style="left:748.5px;width:963.5px;top:494.65px;"><b>ツ</b><b>ー</b><b>エ</b><b>ム</b><b>ク</b><b>ロ</b><b>ノ</b><b>ス</b><b>は</b><b>渋</b><b>っ</b><b>た</b><b>馬</b><b>場</b><b>が</b><b>ち</b><b>ょ</b><b>う</b><b>ど</b><b>良</b><b>く</b><b>合</b><b>う</b><b>可</b><b>能</b><b>性</b><b>あ</b><b>り</b><b>。</b></div>
<div class="hl" style="top:523.65px;left:0px"></div><div class="hl" style="top:523.65px;left:0;width:92.5px;background:#ececec"></div>
<div class="c y" style="left:0px;width:58px;top:525.54px;"><b>中</b><b>山</b></div><div class="c y" style="left:60px;width:32.75px;top:525.54px;text-align:right;padding-right:5px;padding-left:0;"><i>9</i></div><div class="c m" style="left:94.5px;width:57.75px;top:525.54px;padding-left:3px;"><b>４</b><b>上</b></div><div class="c r" style="left:154.25px;width:159.75px;top:525.54px;"><b>安</b><b>房</b><b>特</b><b>別</b><i>･</i><i>2</i><b>勝</b></div><div class="c k" style="left:316px;width:58px;top:525.54px;"><b>定</b><b>量</b></div><div class="c b" style="left:376px;width:83px;top:525.54px;padding-left:1.5px;"><b>芝</b><i>2</i><i>5</i><i>0</i><i>0</i></div><div class="c m" style="left:461px;width:32.5px;top:525.54px;padding-left:3.5px;"><i>&nbsp;</i><i>8</i></div><div class="c k" style="left:495.25px;width:71.25px;top:525.54px;padding-left:1.5px;"><i>1</i><i>4</i><i>:</i><i>1</i><i>5</i></div><div class="c br" style="left:568.5px;width:58.25px;top:525.54px;"><b>勝</b><b>負</b></div><div class="c k" style="left:628.75px;width:58.25px;top:525.54px;"><b>平</b><b>Ｃ</b></div><div class="c k" style="left:748.5px;width:963.5px;top:525.54px;"><b>よ</b><b>う</b><b>や</b><b>く</b><b>合</b><b>い</b><b>そ</b><b>う</b><b>な</b><b>条</b><b>件</b><b>を</b><b>使</b><b>っ</b><b>て</b><b>き</b><b>た</b><b>ダ</b><b>イ</b><b>シ</b><b>ン</b><b>ア</b><b>ポ</b><b>ロ</b><b>ン</b><b>。</b></div>
<div class="hl" style="top:554.54px;left:0px"></div><div class="hl" style="top:554.54px;left:0;width:92.5px;background:#ececec"></div>
<div class="c p" style="left:0px;width:58px;top:556.43px;"><b>阪</b><b>神</b></div><div class="c p" style="left:60px;width:32.75px;top:556.43px;text-align:right;padding-right:5px;padding-left:0;"><i>9</i></div><div class="c g" style="left:94.5px;width:57.75px;top:556.43px;padding-left:3px;"><b>３</b><b>歳</b></div><div class="c r" style="left:154.25px;width:159.75px;top:556.43px;"><b>バ</b><b>イ</b><b>オ</b><b>レ</b></div><div class="c k" style="left:316px;width:58px;top:556.43px;"><b>別</b><b>定</b></div><div class="c k" style="left:376px;width:83px;top:556.43px;padding-left:1.5px;"><b>ダ</b><i>1</i><i>4</i><i>0</i><i>0</i></div><div class="c m" style="left:461px;width:32.5px;top:556.43px;padding-left:3.5px;"><i>1</i><i>2</i></div><div class="c k" style="left:495.25px;width:71.25px;top:556.43px;padding-left:1.5px;"><i>1</i><i>4</i><i>:</i><i>2</i><i>5</i></div><div class="c bg" style="left:568.5px;width:58.25px;top:556.43px;"><b>回</b><b>避</b></div><div class="c br" style="left:628.75px;width:58.25px;top:556.43px;"><b>軽</b><b>Ａ</b></div><div class="c k" style="left:748.5px;width:963.5px;top:556.43px;"><b>次</b><b>走</b><b>注</b><b>目</b><b>馬</b><b>マ</b><b>ジ</b><b>ッ</b><b>ク</b><b>ク</b><b>ッ</b><b>キ</b><b>ー</b><b>は</b><b>い</b><b>る</b><b>が</b><b>、</b><b>特</b><b>殊</b><b>馬</b><b>場</b><b>で</b><b>人</b><b>気</b><b>で</b><b>は</b><b>買</b><b>い</b><b>づ</b><b>ら</b><b>い</b><b>。</b></div>
<div class="hl" style="top:585.43px;left:0px"></div><div class="hl" style="top:585.43px;left:0;width:92.5px;background:#ececec"></div>
<div class="c y" style="left:0px;width:58px;top:587.32px;"><b>中</b><b>山</b></div><div class="c y" style="left:60px;width:32.75px;top:587.32px;text-align:right;padding-right:5px;padding-left:0;"><i>1</i><i>0</i></div><div class="c m" style="left:94.5px;width:57.75px;top:587.32px;padding-left:3px;"><b>４</b><b>上</b></div><div class="c r" style="left:154.25px;width:159.75px;top:587.32px;"><b>ア</b><b>リ</b><b>エ</b><b>Ｈ</b><i>･</i><i>3</i><b>勝</b></div><div class="c k" style="left:316px;width:58px;top:587.32px;"><i>ﾊ</i><i>ﾝ</i><i>ﾃ</i><i class="q">ﾞ</i></div><div class="c k" style="left:376px;width:83px;top:587.32px;padding-left:1.5px;"><b>ダ</b><i>1</i><i>8</i><i>0</i><i>0</i></div><div class="c m" style="left:461px;width:32.5px;top:587.32px;padding-left:3.5px;"><i>1</i><i>6</i></div><div class="c k" style="left:495.25px;width:71.25px;top:587.32px;padding-left:1.5px;"><i>1</i><i>4</i><i>:</i><i>5</i><i>0</i></div><div class="c bb" style="left:568.5px;width:58.25px;top:587.32px;"><b>少</b><b>額</b></div><div class="c bm" style="left:628.75px;width:58.25px;top:587.32px;"><b>軽</b><b>Ｓ</b></div><div class="c k" style="left:748.5px;width:963.5px;top:587.32px;"><b>高</b><b>速</b><b>馬</b><b>場</b><b>で</b><b>展</b><b>開</b><b>が</b><b>向</b><b>き</b><b>そ</b><b>う</b><b>な</b><b>デ</b><b>ル</b><b>ア</b><b>ヴ</b><b>ァ</b><b>ー</b><b>。</b></div>
<div class="hl" style="top:616.32px;left:0px"></div><div class="hl" style="top:616.32px;left:0;width:92.5px;background:#ececec"></div>
<div class="c p" style="left:0px;width:58px;top:618.21px;"><b>阪</b><b>神</b></div><div class="c p" style="left:60px;width:32.75px;top:618.21px;text-align:right;padding-right:5px;padding-left:0;"><i>1</i><i>0</i></div><div class="c m" style="left:94.5px;width:57.75px;top:618.21px;padding-left:3px;"><b>４</b><b>上</b></div><div class="c r" style="left:154.25px;width:159.75px;top:618.21px;"><b>心</b><b>斎</b><b>橋</b><b>Ｈ</b><i>･</i><i>3</i><b>勝</b></div><div class="c k" style="left:316px;width:58px;top:618.21px;"><i>ﾊ</i><i>ﾝ</i><i>ﾃ</i><i class="q">ﾞ</i></div><div class="c b" style="left:376px;width:83px;top:618.21px;padding-left:1.5px;"><b>芝</b><i>1</i><i>4</i><i>0</i><i>0</i></div><div class="c m" style="left:461px;width:32.5px;top:618.21px;padding-left:3.5px;"><i>1</i><i>8</i></div><div class="c k" style="left:495.25px;width:71.25px;top:618.21px;padding-left:1.5px;"><i>1</i><i>5</i><i>:</i><i>0</i><i>0</i></div><div class="c bg" style="left:568.5px;width:58.25px;top:618.21px;"><b>回</b><b>避</b></div><div class="c bo" style="left:628.75px;width:58.25px;top:618.21px;"><b>軽</b><b>Ｂ</b></div><div class="c k" style="left:748.5px;width:963.5px;top:618.21px;"><b>特</b><b>に</b><b>買</b><b>い</b><b>た</b><b>い</b><b>馬</b><b>は</b><b>い</b><b>ま</b><b>せ</b><b>ん</b><b>。</b></div>
<div class="hl" style="top:647.21px;left:0px"></div><div class="hl" style="top:647.21px;left:0;width:92.5px;background:#ececec"></div>
<div class="c y" style="left:0px;width:58px;top:649.10px;"><b>中</b><b>山</b></div><div class="c y" style="left:60px;width:32.75px;top:649.10px;text-align:right;padding-right:5px;padding-left:0;"><i>1</i><i>1</i></div><div class="c m" style="left:94.5px;width:57.75px;top:649.10px;padding-left:3px;"><b>４</b><b>上</b></div><div class="c r" style="left:154.25px;width:159.75px;top:649.10px;"><b>美</b><b>浦</b><b>Ｓ</b><i>･</i><i>3</i><b>勝</b></div><div class="c k" style="left:316px;width:58px;top:649.10px;"><b>定</b><b>量</b></div><div class="c b" style="left:376px;width:83px;top:649.10px;padding-left:1.5px;"><b>芝</b><i>2</i><i>0</i><i>0</i><i>0</i></div><div class="c m" style="left:461px;width:32.5px;top:649.10px;padding-left:3.5px;"><i>1</i><i>6</i></div><div class="c k" style="left:495.25px;width:71.25px;top:649.10px;padding-left:1.5px;"><i>1</i><i>5</i><i>:</i><i>2</i><i>5</i></div><div class="c br" style="left:568.5px;width:58.25px;top:649.10px;"><b>勝</b><b>負</b></div><div class="c k" style="left:628.75px;width:58.25px;top:649.10px;"><b>平</b><b>Ｃ</b></div><div class="c k" style="left:748.5px;width:963.5px;top:649.10px;"><b>渋</b><b>っ</b><b>た</b><b>馬</b><b>場</b><b>で</b><b>展</b><b>開</b><b>ハ</b><b>マ</b><b>り</b><b>そ</b><b>う</b><b>な</b><b>タ</b><b>イ</b><b>キ</b><b>ラ</b><b>フ</b><b>タ</b><b>ー</b><b>。</b></div>
<div class="hl" style="top:678.10px;left:0px"></div><div class="hl" style="top:678.10px;left:0;width:92.5px;background:#ececec"></div>
<div class="c p" style="left:0px;width:58px;top:679.99px;"><b>阪</b><b>神</b></div><div class="c p" style="left:60px;width:32.75px;top:679.99px;text-align:right;padding-right:5px;padding-left:0;"><i>1</i><i>1</i></div><div class="c m" style="left:94.5px;width:57.75px;top:679.99px;padding-left:3px;"><b>４</b><b>上</b></div><div class="c r" style="left:154.25px;width:159.75px;top:679.99px;"><b>大</b><b>阪</b><b>杯</b><i class="w">G</i><i>1</i></div><div class="c k" style="left:316px;width:58px;top:679.99px;"><b>定</b><b>量</b></div><div class="c b" style="left:376px;width:83px;top:679.99px;padding-left:1.5px;"><b>芝</b><i>2</i><i>0</i><i>0</i><i>0</i></div><div class="c m" style="left:461px;width:32.5px;top:679.99px;padding-left:3.5px;"><i>1</i><i>5</i></div><div class="c k" style="left:495.25px;width:71.25px;top:679.99px;padding-left:1.5px;"><i>1</i><i>5</i><i>:</i><i>4</i><i>0</i></div><div class="c br" style="left:568.5px;width:58.25px;top:679.99px;"><b>勝</b><b>負</b></div><div class="c bo" style="left:628.75px;width:58.25px;top:679.99px;"><b>軽</b><b>Ｂ</b></div><div class="c k" style="left:748.5px;width:963.5px;top:679.99px;"><b>立</b><b>ち</b><b>回</b><b>り</b><b>優</b><b>勢</b><b>の</b><b>レ</b><b>ー</b><b>ス</b><b>に</b><b>な</b><b>れ</b><b>ば</b><b>シ</b><b>ョ</b><b>ウ</b><b>ヘ</b><b>イ</b><b>が</b><b>有</b><b>力</b><b>。</b></div>
<div class="hl" style="top:708.99px;left:0px"></div><div class="hl" style="top:708.99px;left:0;width:92.5px;background:#ececec"></div>
<div class="c y" style="left:0px;width:58px;top:710.88px;"><b>中</b><b>山</b></div><div class="c y" style="left:60px;width:32.75px;top:710.88px;text-align:right;padding-right:5px;padding-left:0;"><i>1</i><i>2</i></div><div class="c m" style="left:94.5px;width:57.75px;top:710.88px;padding-left:3px;"><b>４</b><b>上</b></div><div class="c r" style="left:154.25px;width:159.75px;top:710.88px;"><b>２</b><b>勝</b><i>ｸ</i><i>ﾗ</i><i>ｽ</i></div><div class="c k" style="left:316px;width:58px;top:710.88px;"><b>定</b><b>量</b></div><div class="c b" style="left:376px;width:83px;top:710.88px;padding-left:1.5px;"><b>芝</b><i>1</i><i>6</i><i>0</i><i>0</i></div><div class="c m" style="left:461px;width:32.5px;top:710.88px;padding-left:3.5px;"><i>1</i><i>2</i></div><div class="c k" style="left:495.25px;width:71.25px;top:710.88px;padding-left:1.5px;"><i>1</i><i>6</i><i>:</i><i>1</i><i>0</i></div><div class="c bg" style="left:568.5px;width:58.25px;top:710.88px;"><b>回</b><b>避</b></div><div class="c k" style="left:628.75px;width:58.25px;top:710.88px;"><b>平</b><b>Ｃ</b></div><div class="c k" style="left:748.5px;width:963.5px;top:710.88px;"><b>特</b><b>に</b><b>買</b><b>い</b><b>た</b><b>い</b><b>馬</b><b>は</b><b>い</b><b>ま</b><b>せ</b><b>ん</b><b>。</b></div>
<div class="hl" style="top:739.88px;left:0px"></div><div class="hl" style="top:739.88px;left:0;width:92.5px;background:#ececec"></div>
<div class="c p" style="left:0px;width:58px;top:741.77px;"><b>阪</b><b>神</b></div><div class="c p" style="left:60px;width:32.75px;top:741.77px;text-align:right;padding-right:5px;padding-left:0;"><i>1</i><i>2</i></div><div class="c m" style="left:94.5px;width:57.75px;top:741.77px;padding-left:3px;"><b>４</b><b>上</b></div><div class="c r" style="left:154.25px;width:159.75px;top:741.77px;"><b>天</b><b>満</b><b>橋</b><b>Ｓ</b><i>･</i><i>3</i><b>勝</b></div><div class="c k" style="left:316px;width:58px;top:741.77px;"><b>定</b><b>量</b></div><div class="c k" style="left:376px;width:83px;top:741.77px;padding-left:1.5px;"><b>ダ</b><i>1</i><i>4</i><i>0</i><i>0</i></div><div class="c m" style="left:461px;width:32.5px;top:741.77px;padding-left:3.5px;"><i>1</i><i>6</i></div><div class="c k" style="left:495.25px;width:71.25px;top:741.77px;padding-left:1.5px;"><i>1</i><i>6</i><i>:</i><i>3</i><i>0</i></div><div class="c bb" style="left:568.5px;width:58.25px;top:741.77px;"><b>少</b><b>額</b></div><div class="c br" style="left:628.75px;width:58.25px;top:741.77px;"><b>軽</b><b>Ａ</b></div><div class="c k" style="left:748.5px;width:963.5px;top:741.77px;"><b>自</b><b>分</b><b>の</b><b>形</b><b>に</b><b>さ</b><b>え</b><b>持</b><b>ち</b><b>込</b><b>め</b><b>ば</b><b>ニ</b><b>ュ</b><b>ー</b><b>オ</b><b>ー</b><b>リ</b><b>ン</b><b>ズ</b><b>。</b></div>
<div class="hl" style="top:770.77px;left:92.5px"></div>
<div class="vl" style="left:58px;top:29.4px;height:741.36px;background:#e9e9e9"></div><div class="vl" style="left:92.75px;top:29.4px;height:741.36px;background:#e9e9e9"></div><div class="vl" style="left:152.25px;top:29.4px;height:741.36px;background:#c8c8c8"></div><div class="vl" style="left:314px;top:29.4px;height:741.36px;background:#c8c8c8"></div><div class="vl" style="left:374px;top:29.4px;height:741.36px;background:#c8c8c8"></div><div class="vl" style="left:459px;top:29.4px;height:741.36px;background:#c8c8c8"></div><div class="vl" style="left:493.5px;top:29.4px;height:741.36px;background:#c8c8c8"></div><div class="vl" style="left:566.5px;top:29.4px;height:741.36px;background:#c8c8c8"></div><div class="vl" style="left:626.75px;top:29.4px;height:741.36px;background:#c8c8c8"></div><div class="vl" style="left:687px;top:29.4px;height:741.36px;background:#c8c8c8"></div><div class="vl" style="left:746.5px;top:29.4px;height:741.36px;background:#c8c8c8"></div>
<div class="a" id="wm" style="left:1057px;top:1212.3px;font-size:37.4px;line-height:44px;color:#bfbfb8">Windows <span style="font-size:29.5px;letter-spacing:-1.5px;position:relative;top:-5px">のライセンス認証</span></div>
</div>
<div class="a" style="left:839px;top:1230px;width:1721px;height:1px;background:#777"></div>
</div>
</body>
</html>
